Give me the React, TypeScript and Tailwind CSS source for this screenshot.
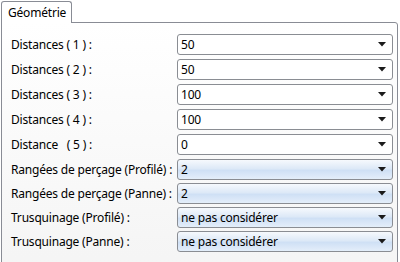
import { ReactNode } from "react";

type Row = { label: string; value: string; blue?: boolean };

const ROWS: Row[] = [
  { label: "Distances ( 1 ) :", value: "50" },
  { label: "Distances ( 2 ) :", value: "50" },
  { label: "Distances ( 3 ) :", value: "100" },
  { label: "Distances ( 4 ) :", value: "100" },
  { label: "Distance\u00a0\u00a0\u00a0( 5 ) :", value: "0" },
  { label: "Rangées de perçage (Profilé) :", value: "2", blue: true },
  { label: "Rangées de perçage (Panne) :", value: "2", blue: true },
  { label: "Trusquinage (Profilé) :", value: "ne pas considérer", blue: true },
  { label: "Trusquinage (Panne) :", value: "ne pas considérer", blue: true },
];

function Arrow() {
  return (
    <svg width="8" height="5" viewBox="0 0 8 5" className="shrink-0">
      <path d="M0 0 H8 L4 4.5 Z" fill="#1a1a1a" />
    </svg>
  );
}

function Combo({ value, blue }: { value: string; blue?: boolean }) {
  return (
    <div
      className={
        "w-[216px] h-[21px] rounded-[3px] border border-[#8a8d93] flex items-center pl-[3px] pr-[6px] " +
        (blue
          ? "bg-[linear-gradient(#f6f9fd_0%,#dde9f7_45%,#cfe0f5_55%,#e4eefa_100%)]"
          : "bg-white")
      }
    >
      <span className="flex-1 text-[12px] leading-none text-black tracking-[-0.2px]">{value}</span>
      <Arrow />
    </div>
  );
}

function Field({ row, first, tight }: { row: Row; first: boolean; tight: boolean }): ReactNode {
  return (
    <div className={"flex items-center h-[21px] " + (first ? "" : tight ? "mt-[3px]" : "mt-[4px]")}>
      <div className="w-[166px] text-[12px] text-black whitespace-nowrap tracking-[-0.2px]">{row.label}</div>
      <Combo value={row.value} blue={row.blue} />
    </div>
  );
}

export default function App() {
  return (
    <div
      className="w-[400px] h-[262px] bg-white overflow-hidden relative"
      style={{ fontFamily: '"Noto Sans", "Open Sans", sans-serif' }}
    >
      <div className="flex items-end pt-[1px] pl-[1px]">
        <div className="h-[22px] w-[71px] border border-b-0 border-[#898c95] rounded-t-[3px] bg-white text-[12px] text-black pl-[6px] pt-[2px] relative z-10 -mb-px tracking-[-0.2px]">
          Géométrie
        </div>
      </div>
      <div className="ml-[1px] w-[397px] h-[260px] border border-[#898c95] rounded-tr-[3px] bg-[linear-gradient(#ffffff,#f4f4f4)] pl-[9px] pt-[11px]">
        <div className="flex flex-col">
          {ROWS.map((r, i) => (
            <Field key={r.label} row={r} first={i === 0} tight={i >= 6} />
          ))}
        </div>
      </div>
    </div>
  );
}
